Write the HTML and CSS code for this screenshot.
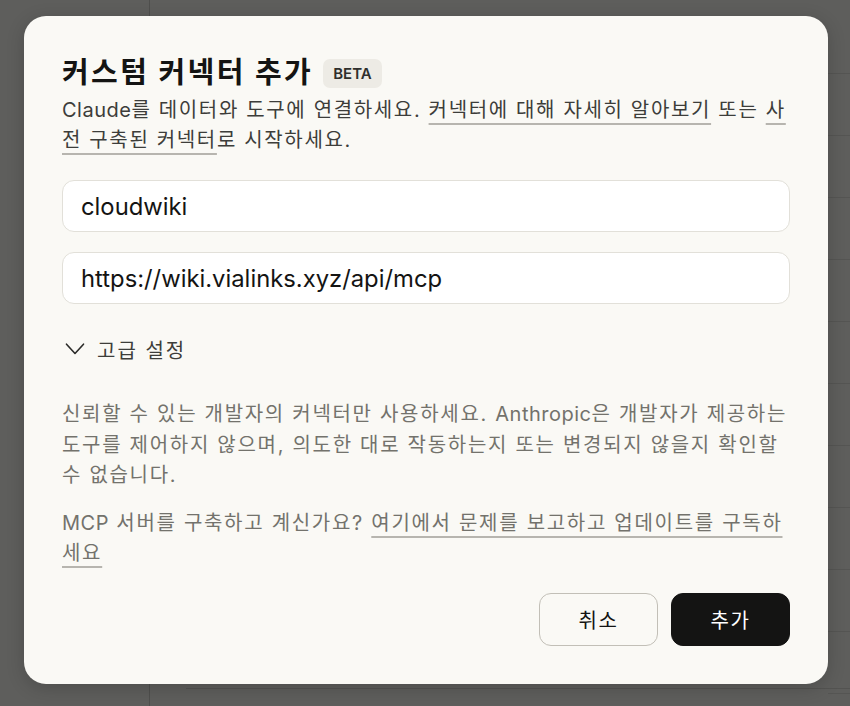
FILE: index.html
```html
<!DOCTYPE html>
<html lang="ko">
<head>
<meta charset="utf-8">
<title>커스텀 커넥터 추가</title>
<link rel="stylesheet" href="styles.css">
</head>
<body>
<div class="dialog" role="dialog" aria-labelledby="dlg-title">
  <div class="head">
    <h1 id="dlg-title" class="title">커스텀 커넥터 추가</h1>
    <span class="badge">BETA</span>
  </div>
  <p class="lead"><span class="en">Claude</span>를 데이터와 도구에 연결하세요. <a class="link" href="#">커넥터에 대해 자세히 알아보기</a> 또는 <a class="link" href="#">사<br>전 구축된 커넥터</a>로 시작하세요.</p>

  <div class="fields">
    <input class="field" type="text" value="cloudwiki" aria-label="이름">
    <input class="field" type="text" value="https://wiki.vialinks.xyz/api/mcp" aria-label="URL">
  </div>

  <button class="advanced" type="button">
    <svg class="chev" width="20" height="12" viewBox="0 0 20 12" aria-hidden="true"><polyline points="1.5,1.2 10,10.5 18.5,1.2" fill="none" stroke="#2b2b29" stroke-width="1.6" stroke-linecap="round" stroke-linejoin="round"/></svg>
    <span>고급 설정</span>
  </button>

  <p class="note">신뢰할 수 있는 개발자의 커넥터만 사용하세요. <span class="en">Anthropic</span>은 개발자가 제공하는 <br>도구를 제어하지 않으며, 의도한 대로 작동하는지 또는 변경되지 않을지 확인할 <br>수 없습니다.</p>
  <p class="note note2"><span class="en">MCP</span> 서버를 구축하고 계신가요? <a class="link" href="#">여기에서 문제를 보고하고 업데이트를 구독하<br>세요</a></p>

  <div class="actions">
    <button class="btn btn-cancel" type="button">취소</button>
    <button class="btn btn-add" type="button">추가</button>
  </div>
</div>
</body>
</html>
```

FILE: styles.css
```css
* { box-sizing: border-box; }
html, body { margin: 0; padding: 0; }
body {
  width: 850px;
  height: 706px;
  overflow: hidden;
  font-family: "Inter", "Noto Sans CJK KR", sans-serif;
  background-color: #5e5e5c;
  background-image:
    linear-gradient(#4f4f4d, #4f4f4d),
    linear-gradient(#535351, #535351),
    repeating-linear-gradient(to bottom, transparent 0 61px, #555553 61px 62px);
  background-size: 1px 706px, 664px 1px, 22px 706px;
  background-position: 149px 0, 186px 688px, 828px 12px;
  background-repeat: no-repeat;
  padding: 16px 22px 0 24px;
}
.dialog {
  width: 804px;
  height: 668px;
  background: #faf9f5;
  border-radius: 22px;
  box-shadow: 0 4px 18px rgba(0,0,0,0.18);
  padding: 37px 38px 38px 38px;
  display: flex;
  flex-direction: column;
}
.head {
  display: flex;
  align-items: center;
  gap: 10px;
  height: 40px;
}
.title {
  margin: 0;
  font-size: 29px;
  font-weight: 700;
  color: #141413;
  letter-spacing: 2.4px;
  line-height: 40px;
}
.badge {
  display: inline-flex;
  align-items: center;
  justify-content: center;
  height: 29px;
  padding: 0 10px;
  border-radius: 7px;
  background: #edebe5;
  color: #2f2f2c;
  font-size: 15px;
  font-weight: 600;
}
.en { letter-spacing: 0.5px; }
.lead {
  margin: 3px 0 0;
  font-size: 20px;
  line-height: 29.5px;
  letter-spacing: 1.65px;
  white-space: nowrap;
  color: #3d3d3a;
}
.link {
  color: inherit;
  text-decoration: underline;
  text-decoration-color: #b7b5af;
  text-decoration-thickness: 2px;
  text-underline-offset: 6px;
}
.fields {
  margin-top: 25px;
  display: flex;
  flex-direction: column;
  gap: 20px;
}
.field {
  display: block;
  width: 100%;
  height: 52px;
  padding: 0 18px;
  border: 1px solid #e2e0d9;
  border-radius: 12px;
  background: #ffffff;
  font-family: inherit;
  font-size: 23.8px;
  color: #141413;
  outline: none;
}
.advanced {
  margin-top: 30px;
  align-self: flex-start;
  display: flex;
  align-items: center;
  gap: 12px;
  height: 30px;
  padding: 0 0 0 3px;
  border: 0;
  background: transparent;
  font-family: inherit;
  font-size: 20px;
  letter-spacing: 2px;
  color: #3d3d3a;
  cursor: pointer;
}
.chev { display: block; }
.note {
  margin: 35px 0 0;
  font-size: 20px;
  line-height: 30.5px;
  letter-spacing: 1.7px;
  white-space: nowrap;
  color: #73726c;
}
.note2 { margin-top: 17px; }
.actions {
  margin-top: auto;
  display: flex;
  justify-content: flex-end;
  gap: 13px;
}
.btn {
  width: 119px;
  height: 53px;
  border-radius: 12px;
  font-family: inherit;
  font-size: 20px;
  letter-spacing: 1.5px;
  cursor: pointer;
}
.btn-cancel {
  background: transparent;
  border: 1px solid #c2bfb7;
  color: #141413;
}
.btn-add {
  background: #141413;
  border: 1px solid #141413;
  color: #ffffff;
}
```
